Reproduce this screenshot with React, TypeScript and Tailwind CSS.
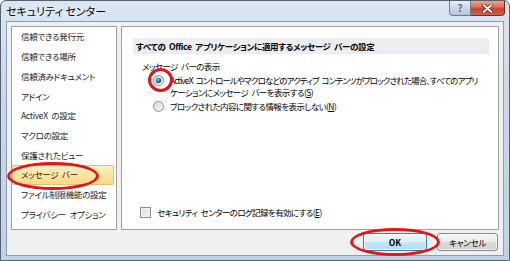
import React from 'react';

const navItems = [
  '信頼できる発行元',
  '信頼できる場所',
  '信頼済みドキュメント',
  'アドイン',
  'ActiveX の設定',
  'マクロの設定',
  '保護されたビュー',
  'メッセージ バー',
  'ファイル制限機能の設定',
  'プライバシー オプション',
];

function Radio({ checked, id }: { checked?: boolean; id: string }) {
  return (
    <svg width="11" height="11" viewBox="0 0 11 11" className="shrink-0">
      <defs>
        <linearGradient id={`rf-${id}`} x1="0" y1="0" x2="1" y2="1">
          <stop offset="0" stopColor="#d6d6d6" />
          <stop offset="1" stopColor="#fbfbfb" />
        </linearGradient>
        <radialGradient id={`rd-${id}`} cx="0.4" cy="0.35" r="0.7">
          <stop offset="0" stopColor="#8fd0f5" />
          <stop offset="0.5" stopColor="#2b7cc4" />
          <stop offset="1" stopColor="#14457f" />
        </radialGradient>
      </defs>
      <circle cx="5.5" cy="5.5" r="5" fill={`url(#rf-${id})`} stroke="#8e8f8f" strokeWidth="1" />
      {checked && <circle cx="5.5" cy="5.5" r="2.7" fill={`url(#rd-${id})`} />}
    </svg>
  );
}

function Mnemonic({ ch }: { ch: string }) {
  return (
    <>
      (<span className="underline underline-offset-[1px]">{ch}</span>)
    </>
  );
}

export default function App() {
  return (
    <div className="relative h-[261px] w-[510px] bg-white font-['Noto_Sans_CJK_JP',sans-serif] text-black [font-feature-settings:'palt'] [word-spacing:2px]">
      <div className="flex h-full w-full flex-col rounded-t-[6px] border border-[#56606e] bg-[linear-gradient(180deg,#dbe6f3_0%,#c9d9eb_35%,#bfd2e8_100%)] px-[5px] pb-[4px]">
        {/* title bar */}
        <div className="-mx-[5px] flex h-[20px] shrink-0 items-start justify-between">
          <span className="pl-[5px] text-[11px] leading-[20px] [word-spacing:0px] [text-shadow:0_0_4px_#ffffff]">
            セキュリティ センター
          </span>
          <div className="flex pr-[4px]">
            <div className="flex h-[15px] w-[22px] items-center justify-center rounded-bl-[4px] border border-t-0 border-[#6c7c93] bg-[linear-gradient(180deg,#e6eef7_0%,#cdd9e7_50%,#b3c4d8_100%)] text-[10px] font-bold leading-none text-[#5b6b80]">
              ?
            </div>
            <div className="flex h-[15px] w-[34px] items-center justify-center rounded-br-[4px] border border-l-0 border-t-0 border-[#7b2c21] bg-[linear-gradient(180deg,#eaa696_0%,#d9694f_45%,#c6432b_55%,#d0634a_100%)]">
              <svg width="11" height="9" viewBox="0 0 11 9">
                <path d="M1.5 1 L9.5 8 M9.5 1 L1.5 8" stroke="#5a1a10" strokeWidth="3.2" strokeLinecap="round" />
                <path d="M1.5 1 L9.5 8 M9.5 1 L1.5 8" stroke="#ffffff" strokeWidth="1.8" strokeLinecap="round" />
              </svg>
            </div>
          </div>
        </div>

        {/* client area */}
        <div className="flex flex-1 flex-col border border-[#8b9db4] bg-[#f0f0f0] px-[4px] pb-[4px] pt-[4px]">
          <div className="flex h-[204px] gap-[4px]">
            <div className="flex w-[106px] shrink-0 flex-col border border-[#a0a0a0] bg-white">
              {navItems.map((item, i) => (
                <div
                  key={item}
                  className={
                    i === 7
                      ? 'mr-[2px] flex h-[19.7px] items-center rounded-[2px] border border-[#e3c26a] bg-[linear-gradient(180deg,#fdf0c8_0%,#fce4a2_50%,#fbd98a_100%)] pl-[8px] text-[8.5px] tracking-[-0.3px] text-[#1e1e1e]'
                      : 'mr-[2px] flex h-[19.7px] items-center border border-transparent pl-[8px] text-[8.5px] tracking-[-0.3px] text-[#1e1e1e]'
                  }
                >
                  {item}
                </div>
              ))}
            </div>

            <div className="flex flex-1 flex-col border border-[#a0a0a0] bg-white">
              <div className="ml-[11px] mr-[9px] mt-[11px] h-[16px] bg-[#ecedf0] pl-[3px] text-[8.5px] font-bold leading-[16px] tracking-[-0.35px]">
                すべての Office アプリケーションに適用するメッセージ バーの設定
              </div>
              <div className="mt-[6px] pl-[20px] text-[8.5px] leading-[12px] tracking-[-0.6px]">
                メッセージ バーの表示
              </div>
              <div className="mt-[2px] flex gap-[6px] pl-[31px]">
                <div className="pt-[1px]">
                  <Radio checked id="a" />
                </div>
                <div className="whitespace-nowrap text-[8.5px] leading-[12px] tracking-[-0.6px]">
                  <span className="tracking-[-0.9px]">
                    ActiveX コントロールやマクロなどのアクティブ コンテンツがブロックされた場合、すべてのアプリ
                  </span>
                  <br />
                  ケーションにメッセージ バーを表示する<Mnemonic ch="S" />
                </div>
              </div>
              <div className="mt-[2px] flex gap-[6px] pl-[31px]">
                <div className="pt-[1px]">
                  <Radio id="b" />
                </div>
                <div className="whitespace-nowrap text-[8.5px] leading-[12px] tracking-[-0.6px]">
                  ブロックされた内容に関する情報を表示しない<Mnemonic ch="N" />
                </div>
              </div>

              <div className="mb-[11px] mt-auto flex items-center gap-[6px] pl-[18px]">
                <div className="h-[11px] w-[11px] shrink-0 border border-[#8e8f8f] bg-[linear-gradient(135deg,#dcdcdc_0%,#f7f7f7_100%)] shadow-[inset_0_0_0_1px_#f4f4f4]" />
                <div className="whitespace-nowrap text-[8.5px] leading-[12px] tracking-[-0.6px]">
                  セキュリティ センターのログ記録を有効にする<Mnemonic ch="E" />
                </div>
              </div>
            </div>
          </div>

          <div className="mt-[3px] flex justify-end gap-[10px] pr-[1px]">
            <button className="flex h-[18px] w-[64px] items-center justify-center rounded-[3px] border border-[#3c7fb1] bg-[linear-gradient(180deg,#ecf7fd_0%,#dcf0fb_50%,#c5e6f8_51%,#b2dcf4_100%)] text-[8.5px] font-semibold shadow-[inset_0_0_0_1px_rgba(255,255,255,0.7)]">
              OK
            </button>
            <button className="flex h-[18px] w-[61px] items-center justify-center rounded-[3px] border border-[#8a8a8a] bg-[linear-gradient(180deg,#f6f6f6_0%,#ebebeb_50%,#dddddd_51%,#cfcfcf_100%)] text-[8.5px] tracking-[-0.3px] shadow-[inset_0_0_0_1px_rgba(255,255,255,0.7)]">
              キャンセル
            </button>
          </div>
        </div>
      </div>

      {/* red annotation ellipses */}
      <div className="pointer-events-none absolute left-[7px] top-[162px] h-[28px] w-[92px] rounded-[50%] border-[3px] border-[#e4141b]" />
      <div className="pointer-events-none absolute left-[148px] top-[68px] h-[24px] w-[25px] rounded-[50%] border-[3px] border-[#e4141b]" />
      <div className="pointer-events-none absolute left-[350px] top-[228px] h-[28px] w-[90px] rounded-[50%] border-[3px] border-[#e4141b]" />
    </div>
  );
}
